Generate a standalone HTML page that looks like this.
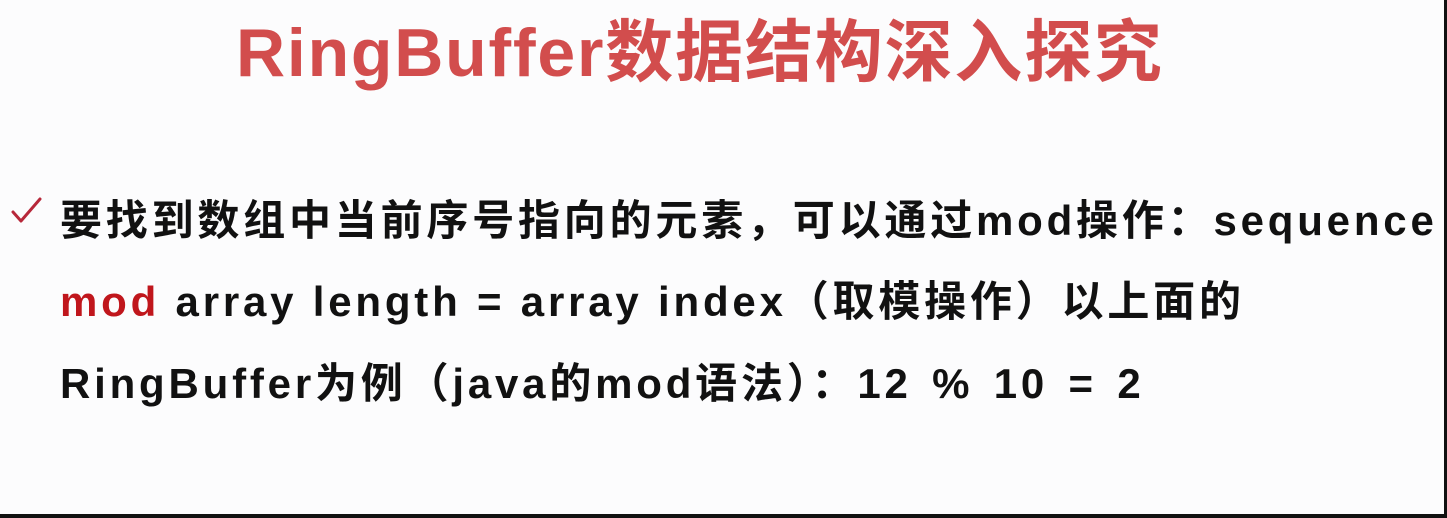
<!DOCTYPE html>
<html><head><meta charset="utf-8"><style>
html,body{margin:0;padding:0;}
body{width:1447px;height:518px;background:#111;position:relative;overflow:hidden;font-family:"Liberation Sans","Noto Sans CJK SC",sans-serif;}
.page{position:absolute;left:0;top:0;width:1444px;height:514px;background:#fcfcfd;}
.t{position:absolute;white-space:nowrap;font-weight:bold;}
#title{left:236px;top:-3px;font-size:68px;color:#d24d4d;letter-spacing:1.8px;}
.l{left:60px;font-size:42px;color:#111;letter-spacing:3.8px;}
.red{color:#c0161c;}
</style></head><body><div class="page">
<div class="t" id="title">RingBuffer数据结构深入探究</div>
<svg style="position:absolute;left:10px;top:196px" width="32" height="30" viewBox="0 0 32 30"><path d="M3 16 L11 25 L30 3" fill="none" stroke="#b7283a" stroke-width="3" stroke-linecap="round" stroke-linejoin="round"/></svg>
<div class="t l" style="top:187px">要找到数组中当前序号指向的元素，可以通过mod操作：sequence</div>
<div class="t l" style="top:268px"><span class="red">mod</span> array length = array index（取模操作）以上面的</div>
<div class="t l" style="top:350px;word-spacing:5px">RingBuffer为例（java的mod语法）：12 % 10 = 2</div>
</div></body></html>
